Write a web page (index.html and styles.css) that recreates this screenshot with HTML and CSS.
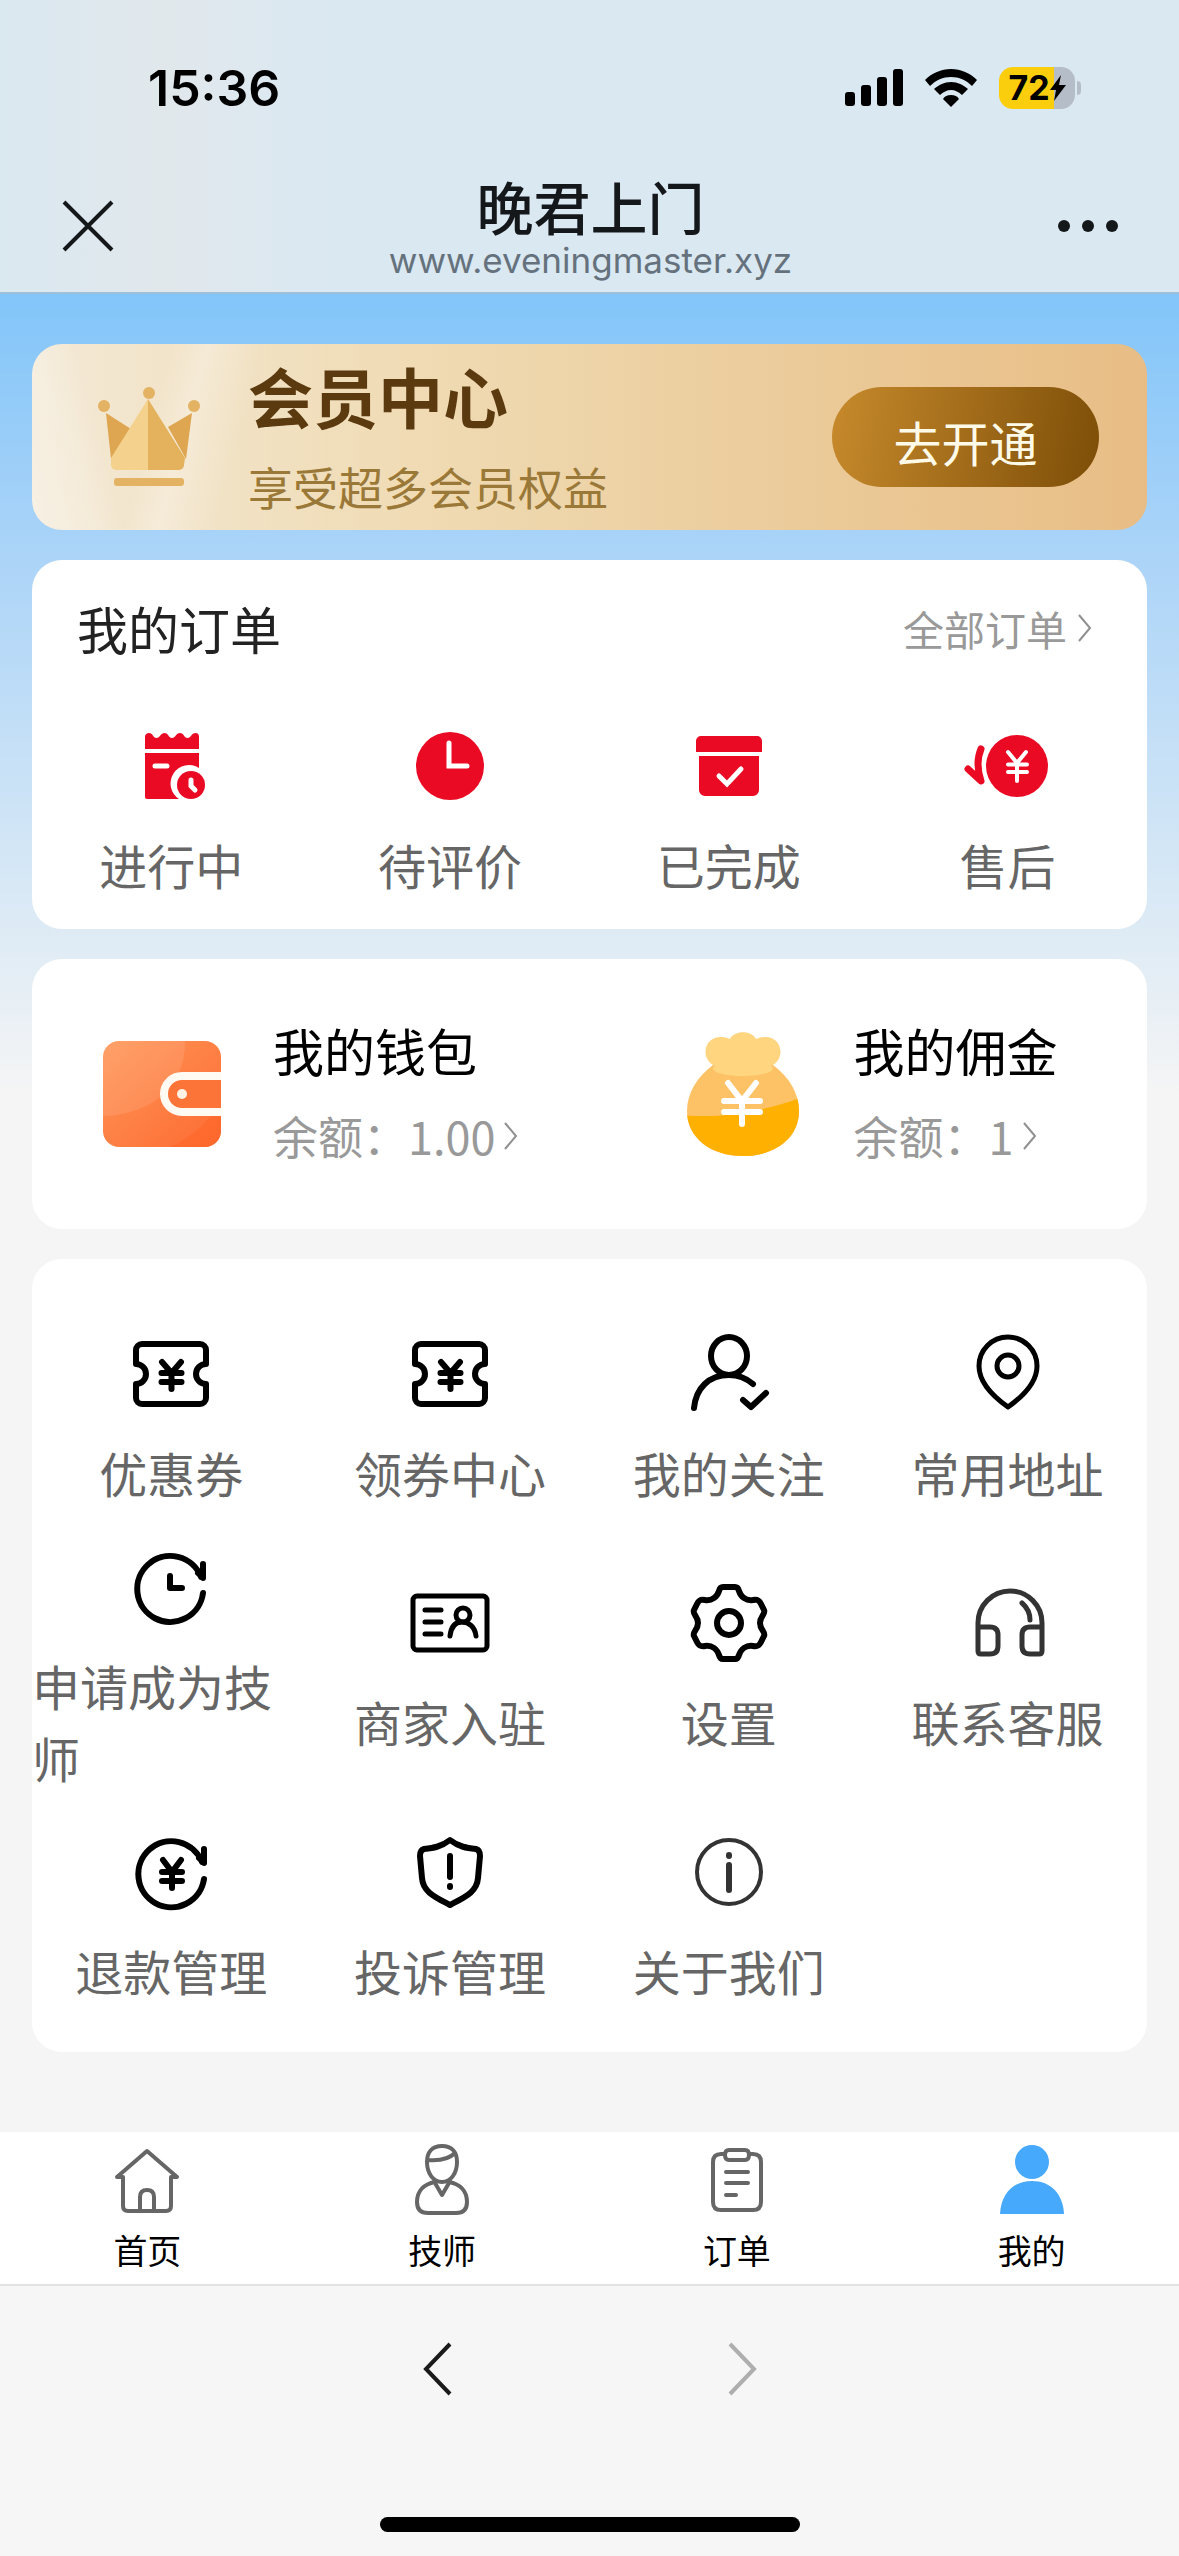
FILE: index.html
```html
<!DOCTYPE html>
<html lang="zh-CN">
<head>
<meta charset="utf-8">
<meta name="viewport" content="width=device-width, initial-scale=1">
<title>晚君上门</title>
<link rel="stylesheet" href="styles.css">
</head>
<body>
<svg class="symbols" aria-hidden="true">
  <symbol id="ticket" viewBox="0 0 92 92">
    <path d="M17 16h58a6 6 0 0 1 6 6v14a10 10 0 0 0 0 20v14a6 6 0 0 1-6 6H17a6 6 0 0 1-6-6V56a10 10 0 0 0 0-20V22a6 6 0 0 1 6-6z"/>
    <path d="M37 34l9.500 11L56 34M36.500 45h20M36.500 54h20M46.500 45v16"/>
  </symbol>
  <symbol id="chevron" viewBox="0 0 16 30"><path d="M2 2l11 13L2 28"/></symbol>
</svg>
<div class="page">
  <header class="header">
    <div class="status">
      <span class="time">15:36</span>
      <div class="signals">
        <svg class="bars" viewBox="0 0 58 38"><rect y="23" width="10" height="14" rx="3"/><rect x="16" y="16" width="10" height="21" rx="3"/><rect x="32" y="8" width="10" height="29" rx="3"/><rect x="48" width="10" height="37" rx="3"/></svg>
        <svg class="wifi" viewBox="0 0 52 38"><path d="M26 0c10 0 19 4 26 11l-5 6C41 11 34 8 26 8S11 11 5 17l-5-6C7 4 16 0 26 0z"/><path d="M26 13c7 0 12 3 17 7l-6 6c-3-3-7-5-11-5s-8 2-11 5l-6-6c5-4 10-7 17-7z"/><path d="M26 26c4 0 6 1 8 4l-8 8-8-8c2-3 4-4 8-4z"/></svg>
        <div class="battery">
          <span class="battery-body">72<svg class="bolt" viewBox="0 0 16 26"><path d="M11 0L0 15h6L4 26 16 10H9z"/></svg></span>
          <span class="battery-cap"></span>
        </div>
      </div>
    </div>
    <div class="titlebar">
      <button class="icon-button" type="button" aria-label="关闭"><svg class="close" viewBox="0 0 52 52"><path d="M2 2l48 48M50 2L2 50"/></svg></button>
      <div class="site">
        <h1 class="site-name">晚君上门</h1>
        <p class="site-url">www.eveningmaster.xyz</p>
      </div>
      <button class="icon-button icon-button-end" type="button" aria-label="更多"><svg class="dots" viewBox="0 0 62 14"><circle cx="7" cy="7" r="6"/><circle cx="31" cy="7" r="6"/><circle cx="55" cy="7" r="6"/></svg></button>
    </div>
  </header>

  <main class="main">
    <section class="card member">
      <svg class="crown" viewBox="0 0 102 100">
        <path d="M8 26l25 16-20 30z" fill="#dea650"/><path d="M94 26L70 40l18 32z" fill="#dea650"/>
        <path d="M50 12L13 71v7a5 5 0 0 0 5 5h32z" fill="#f4d18d"/><path d="M50 12l37 59-1 7a5 5 0 0 1-5 5H50z" fill="#e4b15c"/>
        <g fill="#e3b262"><circle cx="6" cy="19" r="6"/><circle cx="51" cy="6" r="6"/><circle cx="96" cy="19" r="6"/><rect x="16" y="91" width="70" height="8" rx="3"/></g>
      </svg>
      <div class="member-text">
        <h2 class="member-title">会员中心</h2>
        <p class="member-note">享受超多会员权益</p>
      </div>
      <button class="join" type="button">去开通</button>
    </section>

    <section class="card orders">
      <div class="orders-head">
        <h2 class="orders-title">我的订单</h2>
        <a class="all" href="#">全部订单<svg class="chevron"><use href="#chevron"/></svg></a>
      </div>
      <nav class="columns">
        <a class="item order" href="#">
          <svg class="red" viewBox="0 0 92 92"><path d="M20 16q1-3 4-3c4 0 4 5 7.500 5s4-5 8-5 4 5 7.500 5 4-5 8-5 4 5 7.500 5 4-5 8-5q3 0 3.500 3V29H20zM20 33h54v15A17 17 0 0 0 54 79H22q-2 0-2-2z"/><circle cx="66" cy="65" r="14"/><path class="cut" d="M30 46h12M66 60v6l4 4"/></svg>
          <span class="label">进行中</span></a>
        <a class="item order" href="#">
          <svg class="red" viewBox="0 0 92 92"><circle cx="46" cy="46" r="34"/><path class="cut" d="M45 23v23h18"/></svg>
          <span class="label">待评价</span></a>
        <a class="item order" href="#">
          <svg class="red" viewBox="0 0 92 92"><path d="M18 16h56a5 5 0 0 1 5 5v11H13V21a5 5 0 0 1 5-5zM16 36h60v34a6 6 0 0 1-6 6H22a6 6 0 0 1-6-6z"/><path class="cut" d="M36 56l8 8 14-15"/></svg>
          <span class="label">已完成</span></a>
        <a class="item order" href="#">
          <svg class="red" viewBox="0 0 92 92"><circle cx="55" cy="46" r="31"/><path class="arrow" d="M19 29q-6 14 0 32L6 49"/><path class="cut thin" d="M46 32l9 11 9-11M46 44.500h19M46 52h19M55 43v18"/></svg>
          <span class="label">售后</span></a>
      </nav>
    </section>

    <section class="card funds">
      <a class="fund" href="#">
        <svg class="fund-icon" viewBox="0 0 120 126">
          <defs><linearGradient id="wallet" x1="0" y1="0" x2="1" y2="1"><stop offset="0" stop-color="#ff9658"/><stop offset="1" stop-color="#fd6b32"/></linearGradient><clipPath id="wallet-clip"><rect x="1" y="10" width="118" height="106" rx="16"/></clipPath></defs>
          <g clip-path="url(#wallet-clip)"><rect x="1" y="10" width="118" height="106" fill="url(#wallet)"/><path d="M1 10h82C84 54 50 84 1 85z" fill="#fff" opacity=".1"/><path d="M119 60c-4 28-30 48-60 60h62z" fill="#ff6425" opacity=".5"/>
          <path d="M124 45H80a18 18 0 0 0 0 36h44" fill="#fd7438" stroke="#fffaf2" stroke-width="8"/><circle cx="80" cy="63" r="5" fill="#fff3e6"/></g>
        </svg>
        <div class="fund-text"><h2 class="fund-title">我的钱包</h2><p class="balance">余额：1.00<svg class="chevron"><use href="#chevron"/></svg></p></div>
      </a>
      <a class="fund" href="#">
        <svg class="fund-icon" viewBox="0 0 120 126">
          <defs><clipPath id="bag-clip"><path d="M30 34C14 46 4 62 4 80c0 27 24 45 56 45s56-18 56-45c0-18-10-34-26-46z"/></clipPath></defs>
          <g clip-path="url(#bag-clip)"><rect width="120" height="126" fill="#fdc266"/><path d="M0 84c38 4 82-4 120-18v60H0z" fill="#ffb000"/></g>
          <path d="M32 35C17 29 20 5 39 6q4 0 8 2c4-9 22-9 26 0q4-2 8-2c19-1 22 23 7 29 8 6-12 10-28 10s-36-4-28-10z" fill="#ffd57f"/>
          <path d="M45 52l14 18 14-18M41 70h36M41 81h36M59 68v25" fill="none" stroke="#fff" stroke-width="6" stroke-linecap="round"/>
        </svg>
        <div class="fund-text"><h2 class="fund-title">我的佣金</h2><p class="balance">余额：1<svg class="chevron"><use href="#chevron"/></svg></p></div>
      </a>
    </section>

    <nav class="card columns services">
      <a class="item" href="#"><svg class="line"><use href="#ticket"/></svg><span class="label">优惠券</span></a>
      <a class="item" href="#"><svg class="line"><use href="#ticket"/></svg><span class="label">领券中心</span></a>
      <a class="item" href="#"><svg class="line" viewBox="0 0 92 92"><ellipse cx="46" cy="28" rx="18" ry="19"/><path d="M11 80c2-20 15-33 35-33 9 0 17 3 24 9M60 72l8 7 15-14"/></svg><span class="label">我的关注</span></a>
      <a class="item" href="#"><svg class="line medium" viewBox="0 0 92 92"><path d="M46 79C29 67 17 54 17 38a29 29 0 0 1 58 0c0 16-12 29-29 41z"/><circle cx="46" cy="38" r="11"/></svg><span class="label">常用地址</span></a>
      <a class="item" href="#"><svg class="line" viewBox="0 0 92 92"><path d="M78 52A33 33 0 1 1 76 36M78 23v14l-5-5M45 35v12h12"/></svg><span class="label">申请成为技师</span></a>
      <a class="item" href="#"><svg class="line medium" viewBox="0 0 92 92"><rect x="9" y="19" width="74" height="54" rx="4"/><path d="M21 33h16M21 45h16M21 57h16M46 59c1-9 5-14 12-14s13 5 14 14"/><circle cx="59" cy="38" r="7"/></svg><span class="label">商家入驻</span></a>
      <a class="item" href="#"><svg class="line" viewBox="0 0 92 92"><path d="M40 10h12q3 0 4 4c2 6 7 10 14 9 4-1 6 0 8 4l3 6c2 4-4 6-4 13s6 9 4 13l-3 6c-2 4-4 5-8 4-7-1-12 3-14 9q-1 4-4 4H40q-3 0-4-4c-2-6-7-10-14-9-4 1-6 0-8-4l-3-6c-2-4 4-6 4-13s-6-9-4-13l3-6c2-4 4-5 8-4 7 1 12-3 14-9q1-4 4-4z"/><circle cx="46" cy="46" r="12"/></svg><span class="label">设置</span></a>
      <a class="item" href="#"><svg class="line soft" viewBox="0 0 92 92"><path d="M16 50h12q8 0 8 8v11q0 8-8 8H19q-3 0-3-3V46a32 32 0 0 1 64 0v28q0 3-3 3h-9q-8 0-8-8V58q0-8 8-8h12M60 26q8 7 8 17"/></svg><span class="label">联系客服</span></a>
      <a class="item" href="#"><svg class="line" viewBox="0 0 92 92"><path d="M79 53A33 33 0 1 1 77 36M79 23v14l-5-5M38 34l9 12 9-12M37 46h20M37 55h20M47 46v16"/></svg><span class="label">退款管理</span></a>
      <a class="item" href="#"><svg class="line" viewBox="0 0 92 92"><path d="M46 14c9 7 17 8 26 9q4 1 4 7l-2 22c-1 14-13 19-28 27-15-8-27-13-28-27l-2-22q0-6 4-7c9-1 17-2 26-9zM46 30v21M46 60v1"/></svg><span class="label">投诉管理</span></a>
      <a class="item" href="#"><svg class="line soft thin" viewBox="0 0 92 92"><circle cx="46" cy="46" r="32"/><path class="stem" d="M46 39v25M46 29v1"/></svg><span class="label">关于我们</span></a>
    </nav>
  </main>

  <nav class="tabs">
    <a class="tab" href="#"><svg class="tab-icon" viewBox="0 0 72 72"><path d="M6 33L36 7l30 26h-6v29q0 5-5 5H17q-5 0-5-5V33zM29 66V53q0-7 7-7t7 7v13"/></svg><span>首页</span></a>
    <a class="tab" href="#"><svg class="tab-icon" viewBox="0 0 72 72"><path d="M36 2c10 0 15 6 15 16 0 11-6 20-15 20s-15-9-15-20C21 8 26 2 36 2zM22 16c12 1 21-1 27-7M29 38c-11 2-18 9-18 20q0 11 11 11h28q11 0 11-11c0-11-7-18-18-20M29 39l7 12 7-12"/></svg><span>技师</span></a>
    <a class="tab" href="#"><svg class="tab-icon" viewBox="0 0 72 72"><path d="M24 10h-4q-8 0-8 8v40q0 8 8 8h32q8 0 8-8V18q0-8-8-8h-4M28 6h16q4 0 4 5t-4 5H28q-4 0-4-5t4-5zM25 28h22M25 39h22M25 51h10"/></svg><span>订单</span></a>
    <a class="tab" href="#" aria-current="page"><svg class="tab-icon active" viewBox="0 0 72 72"><circle cx="36" cy="18" r="17"/><path d="M4 70c1-20 13-33 32-33s31 13 32 33z"/></svg><span>我的</span></a>
  </nav>

  <footer class="browser">
    <div class="history">
      <button class="history-button" type="button" aria-label="后退"><svg class="arrow-icon" viewBox="0 0 30 54"><path d="M27 2L3 27l24 25"/></svg></button>
      <button class="history-button" type="button" aria-label="前进" disabled><svg class="arrow-icon" viewBox="0 0 30 54"><path d="M3 2l24 25L3 52"/></svg></button>
    </div>
    <div class="home-bar"></div>
  </footer>
</div>
</body>
</html>
```

FILE: styles.css
```css
* { box-sizing: border-box; }

body {
  margin: 0;
  background: #f5f5f5;
  font-family: "Noto Sans CJK SC", sans-serif;
  font-weight: 400;
  color: #000;
}

h1, h2, p { margin: 0; font-weight: inherit; }
a { color: inherit; text-decoration: none; }
button { padding: 0; border: 0; background: none; font: inherit; color: inherit; }
svg { display: block; flex: none; }
.symbols { position: absolute; width: 0; height: 0; }

.page { display: flex; flex-direction: column; min-height: 100vh; }

/* status and title bars */
.header {
  padding-top: 56px;
  border-bottom: 2px solid #9fc0da;
  background: linear-gradient(90deg, #dae8f0 0, #e1e8ec 14%, #dae8f2 28%, #dae8f2 100%);
}
.status { display: flex; justify-content: space-between; align-items: center; height: 64px; padding: 0 98px 0 148px; }
.time { font: 600 50px/64px Inter, sans-serif; }
.signals { display: flex; align-items: center; gap: 22px; }
.bars { width: 58px; height: 38px; }
.wifi { width: 52px; height: 38px; }
.battery { display: flex; align-items: center; gap: 2px; }
.battery-body {
  display: flex;
  align-items: center;
  justify-content: center;
  width: 76px;
  height: 42px;
  border-radius: 14px;
  background: linear-gradient(90deg, #fbce0d 72%, #b5bec8 72%);
  font: 700 34px/42px Inter, sans-serif;
}
.bolt { width: 16px; height: 26px; }
.battery-cap { width: 4px; height: 14px; border-radius: 0 4px 4px 0; background: #b5bec8; }

.titlebar { display: flex; align-items: flex-start; height: 172px; padding: 52px 60px 0 62px; }
.icon-button { display: flex; align-items: center; width: 120px; height: 108px; }
.icon-button-end { justify-content: flex-end; }
.close { width: 52px; height: 52px; fill: none; stroke: #15181b; stroke-width: 4; }
.dots { width: 62px; height: 14px; fill: #15181b; }
.site { flex: 1; text-align: center; }
.site-name { font-size: 57px; font-weight: 500; line-height: 66px; color: #15181b; }
.site-url { font: 400 35px/44px Inter, sans-serif; color: #65727d; }

/* page content */
.main {
  display: flex;
  flex: 1;
  flex-direction: column;
  gap: 30px;
  padding: 50px 32px 80px;
  background: linear-gradient(#82c5f9 0, #a9d3f8 246px, #deebf5 640px, #f5f5f5 800px);
}
.card { border-radius: 30px; background: #fff; }

.member {
  display: flex;
  align-items: center;
  height: 186px;
  padding: 0 48px 0 66px;
  background:
    linear-gradient(75deg, #fff5 0, #fff3 5%, #fff0 8%, #fff0 100%),
    linear-gradient(105deg, #fff0 12%, #fff4 15%, #fff0 20%),
    linear-gradient(90deg, #f3e9d6, #f0dcb6 32%, #eccfa0 60%, #e8bd85);
}
.crown { width: 102px; height: 100px; }
.member-text { flex: 1; padding-left: 48px; }
.member-title { font-size: 65px; font-weight: 700; line-height: 100px; color: #5c3a10; }
.member-note { font-size: 45px; line-height: 84px; color: #9a7837; }
.join {
  width: 267px;
  height: 100px;
  padding-top: 8px;
  border-radius: 50px;
  background: linear-gradient(100deg, #c78a2c, #7d4e08);
  font-size: 48px;
  line-height: 92px;
  color: #fffbe8;
}

.orders { padding: 32px 0 29px; }
.orders-head { display: flex; justify-content: space-between; align-items: center; padding: 0 54px 0 45px; }
.orders-title { font-size: 51px; line-height: 72px; color: #222; }
.all { display: flex; align-items: center; gap: 10px; font-size: 41px; line-height: 60px; color: #999; }
.chevron { width: 16px; height: 30px; fill: none; stroke: #909090; stroke-width: 2; }

.columns { display: grid; grid-template-columns: repeat(4, 1fr); }
.item { display: flex; flex-direction: column; align-items: center; justify-content: center; gap: 16px; color: #666; }
.order { padding-top: 56px; }
.label { font-size: 48px; line-height: 72px; }
.red { width: 92px; height: 92px; fill: #ea0a24; }
.red .cut { fill: none; stroke: #fff; stroke-width: 5; stroke-linecap: round; }
.red .cut.thin { stroke-width: 4; }
.red .arrow { fill: none; stroke: #ea0a24; stroke-width: 7; stroke-linecap: round; stroke-linejoin: round; }

.funds { display: grid; grid-template-columns: 5fr 4fr; height: 270px; padding-left: 70px; }
.fund { display: flex; align-items: center; gap: 51px; }
.fund-icon { width: 120px; height: 126px; }
.fund-title { font-size: 51px; line-height: 84px; }
.balance { display: flex; align-items: center; gap: 8px; font-size: 45px; line-height: 88px; color: #999; }

.services { grid-auto-rows: 249px; padding: 34px 0 12px; }
.line {
  width: 92px;
  height: 92px;
  fill: none;
  stroke: #000;
  stroke-width: 6;
  stroke-linecap: round;
  stroke-linejoin: round;
}
.line.medium { stroke-width: 5; }
.line.soft { stroke: #333; stroke-width: 5; }
.line.thin { stroke-width: 4; }
.line .stem { stroke-width: 6; }

/* bottom navigation */
.tabs { display: grid; grid-template-columns: repeat(4, 1fr); border-bottom: 2px solid #e2e2e2; background: #fff; }
.tab {
  display: flex;
  flex-direction: column;
  align-items: center;
  gap: 10px;
  padding: 12px 0 10px;
  font-size: 34px;
  line-height: 48px;
}
.tab-icon { width: 72px; height: 72px; fill: none; stroke: #666; stroke-width: 4; stroke-linejoin: round; stroke-linecap: round; }
.tab-icon.active { fill: #46a9fb; stroke: none; }

.browser { display: flex; flex-direction: column; align-items: center; justify-content: space-between; height: 270px; padding: 56px 0 24px; background: #f6f6f6; }
.history { display: flex; gap: 274px; }
.history-button { color: #1a1a1a; }
.history-button:disabled { color: #aeaeae; }
.arrow-icon { width: 30px; height: 54px; fill: none; stroke: currentColor; stroke-width: 4; }
.home-bar { width: 420px; height: 15px; border-radius: 8px; background: #000; }
```
